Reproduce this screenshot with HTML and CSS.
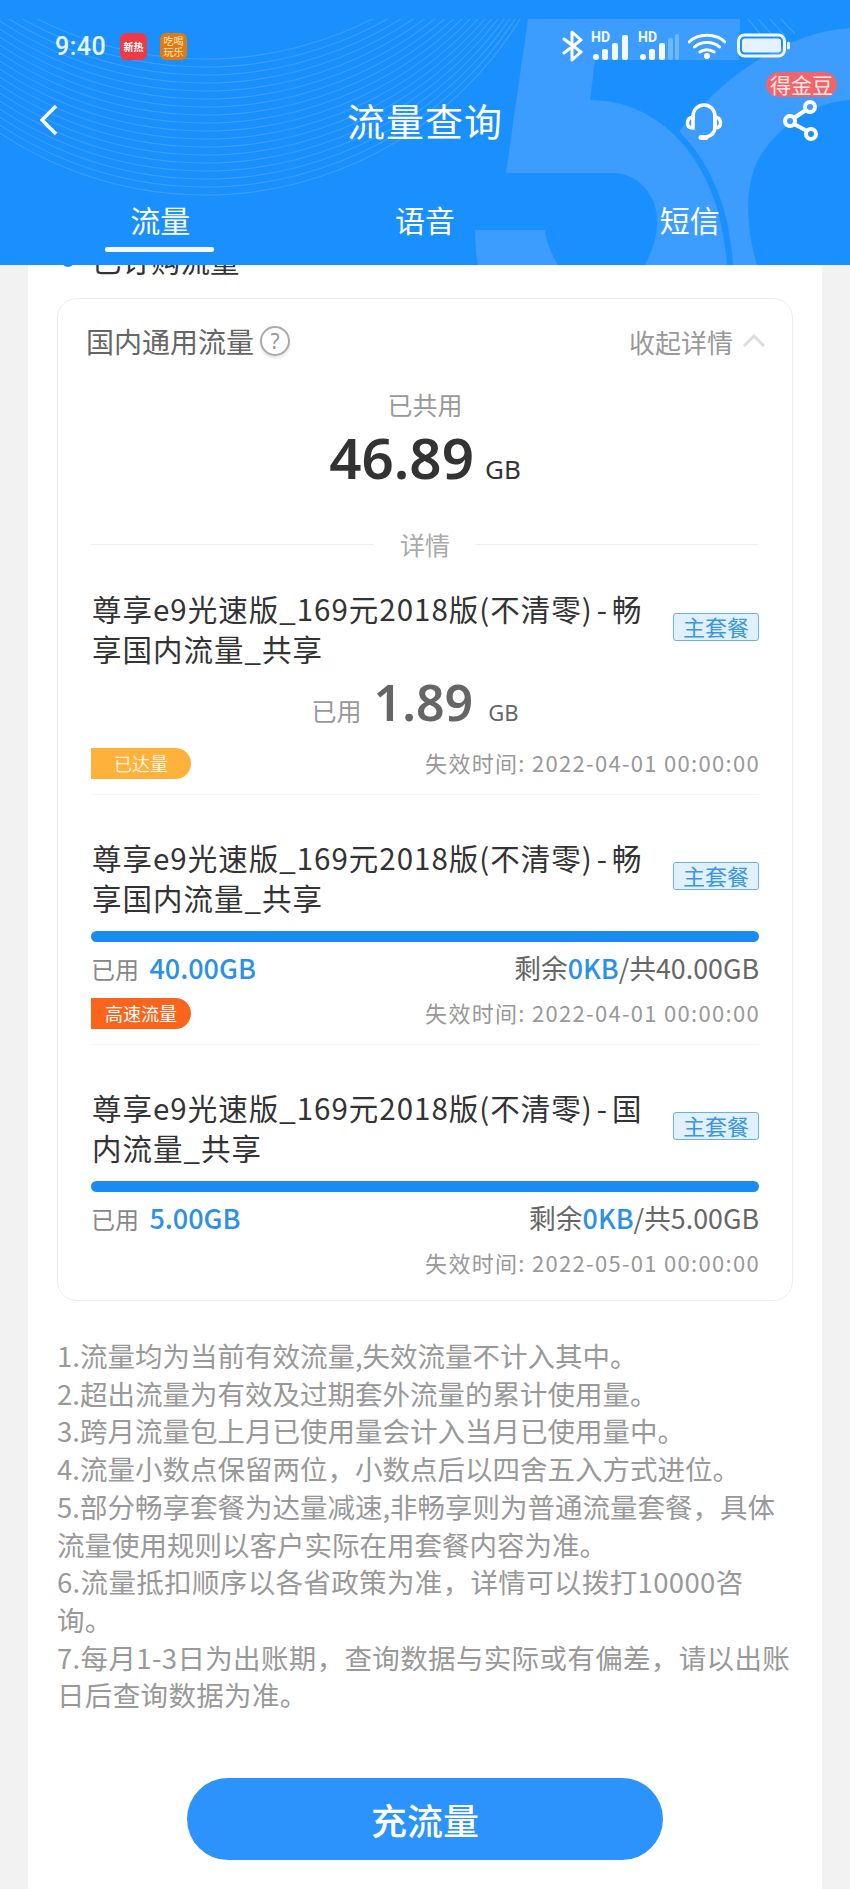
FILE: index.html
```html
<!DOCTYPE html>
<html lang="zh-CN">
<head>
<meta charset="utf-8">
<title>流量查询</title>
<link rel="stylesheet" href="styles.css">
</head>
<body>
<header class="header">
  <svg class="decor" width="850" height="265" viewBox="0 0 850 265" aria-hidden="true">
    <defs><clipPath id="lines"><rect x="0" y="19" width="850" height="246"/></clipPath></defs>
    <path class="shape" d="M850 28C790 32 730 70 680 130L700 265H757C745 225 745 185 758 160C775 130 810 102 850 100Z"/>
    <path class="shape five" d="M528 19H740L739 60H595L590 100C660 100 720 160 727 265H645C658 240 662 215 650 195C640 178 625 173 612 173H506ZM475 230H545C547 245 552 255 558 265H478C476 255 475 240 475 230Z"/>
    <g class="arcs" clip-path="url(#lines)">
      <circle cx="205" cy="-175" r="370"/><circle cx="205" cy="-183" r="370"/><circle cx="205" cy="-191" r="370"/>
      <circle cx="205" cy="-199" r="370"/><circle cx="205" cy="-207" r="370"/><circle cx="205" cy="-215" r="370"/>
      <circle cx="205" cy="-223" r="370"/><circle cx="205" cy="-231" r="370"/><circle cx="205" cy="-239" r="370"/>
      <circle cx="205" cy="-247" r="370"/><circle cx="205" cy="-255" r="370"/><circle cx="205" cy="-263" r="370"/>
      <circle cx="205" cy="-271" r="370"/><circle cx="205" cy="-279" r="370"/><circle cx="205" cy="-287" r="370"/>
      <circle cx="205" cy="-295" r="370"/><circle cx="205" cy="-303" r="370"/><circle cx="205" cy="-311" r="370"/>
      <path d="M748 19L762 36M758 19L775 38M770 19L785 36M781 19L795 34"/>
    </g>
  </svg>
  <div class="status">
    <div class="status-left">
      <span class="time">9:40</span>
      <span class="app app-red">新热</span>
      <span class="app app-orange">吃喝玩乐</span>
    </div>
    <div class="status-right">
      <svg width="22" height="32" viewBox="0 0 22 32" class="ico-line"><path d="M2 9L19 22L10 30V2L19 10L2 23"/></svg>
      <svg width="40" height="30" viewBox="0 0 40 30" class="sig"><text x="0" y="11" class="hd">HD</text><rect x="2" y="23" width="6" height="6" rx="3"/><rect x="11" y="18" width="6" height="11" rx="2"/><rect x="21" y="12" width="6" height="17" rx="2"/><rect x="31" y="4" width="6" height="25" rx="2"/></svg>
      <svg width="42" height="30" viewBox="0 0 42 30" class="sig"><text x="0" y="11" class="hd">HD</text><rect x="2" y="23" width="6" height="6" rx="3"/><rect x="11" y="18" width="6" height="11" rx="2"/><rect x="21" y="12" width="6" height="17" rx="2"/><rect class="dim" x="30" y="7" width="5" height="22" rx="2"/><rect class="dim" x="37" y="3" width="4" height="26" rx="2"/></svg>
      <svg width="38" height="28" viewBox="0 0 38 28" class="ico-line wifi"><path d="M1 10C10 1 28 1 37 10M6.500 15C13 9 25 9 31.500 15M12 20C16 17 22 17 26 20"/><circle class="dot" cx="19" cy="24" r="3"/></svg>
      <svg width="55" height="26" viewBox="0 0 55 26" class="batt"><rect class="batt-box" x="1.500" y="2" width="46" height="21" rx="6"/><rect class="batt-fill" x="5" y="5.500" width="39" height="14" rx="3"/><rect class="batt-fill" x="50" y="8.500" width="3" height="8" rx="1.500"/></svg>
    </div>
  </div>
  <div class="nav">
    <svg class="back" width="18" height="32" viewBox="0 0 18 32"><path d="M16 2L2 16L16 30"/></svg>
    <h1 class="title">流量查询</h1>
    <svg class="headset" width="38" height="40" viewBox="0 0 38 40"><path d="M8 17V15C8 -1 30 -1 30 15V24C30 30 27 34 21 35"/><path d="M8 15C4 15 2.500 18 2.500 21C2.500 24 4 26 8 26ZM30 15C34 15 35.500 18 35.500 21C35.500 24 34 26 30 26Z"/><path class="mic" d="M16 35.500H21"/></svg>
    <svg class="share" width="36" height="42" viewBox="0 0 36 42"><circle cx="27" cy="7" r="5"/><circle cx="7" cy="21" r="5"/><circle cx="28" cy="34" r="5"/><path d="M23 10L11 18M11 24L24 31"/></svg>
    <span class="badge">得金豆</span>
  </div>
  <nav class="tabs">
    <a class="tab tab-on">流量</a>
    <a class="tab">语音</a>
    <a class="tab">短信</a>
  </nav>
</header>

<main class="panel">
  <div class="heading"><i class="dot-mark"></i>已订购流量</div>
  <section class="card">
    <div class="card-head">
      <div class="head-left">国内通用流量<span class="help">?</span></div>
      <div class="head-right">收起详情<svg width="24" height="14" viewBox="0 0 24 14"><path d="M2 12L12 2L22 12"/></svg></div>
    </div>
    <div class="total-label">已共用</div>
    <div class="total"><b>46.89</b><span>GB</span></div>
    <div class="divider"><i></i><span>详情</span><i></i></div>

    <article class="item">
      <div class="item-top">
        <div class="item-title"><span class="ln">尊享e9光速版_169元2018版(不清零)<span class="dash">-</span>畅</span><span class="ln">享国内流量_共享</span></div>
        <span class="tag">主套餐</span>
      </div>
      <div class="used-big"><span class="ub-label">已用</span><b>1.89</b><span class="ub-unit">GB</span></div>
      <div class="foot"><span class="pill pill-amber">已达量</span><span class="expire">失效时间: 2022-04-01 00:00:00</span></div>
    </article>

    <article class="item">
      <div class="item-top">
        <div class="item-title"><span class="ln">尊享e9光速版_169元2018版(不清零)<span class="dash">-</span>畅</span><span class="ln">享国内流量_共享</span></div>
        <span class="tag">主套餐</span>
      </div>
      <div class="bar"></div>
      <div class="meter"><span>已用 <em>40.00GB</em></span><span class="left">剩余<em>0KB</em>/共40.00GB</span></div>
      <div class="foot foot-tight"><span class="pill pill-red">高速流量</span><span class="expire">失效时间: 2022-04-01 00:00:00</span></div>
    </article>

    <article class="item item-last">
      <div class="item-top">
        <div class="item-title"><span class="ln">尊享e9光速版_169元2018版(不清零)<span class="dash">-</span>国</span><span class="ln">内流量_共享</span></div>
        <span class="tag">主套餐</span>
      </div>
      <div class="bar"></div>
      <div class="meter"><span>已用 <em>5.00GB</em></span><span class="left">剩余<em>0KB</em>/共5.00GB</span></div>
      <div class="foot foot-end"><span class="expire">失效时间: 2022-05-01 00:00:00</span></div>
    </article>
  </section>

  <ol class="notes">
    <li>1.流量均为当前有效流量,失效流量不计入其中。</li>
    <li>2.超出流量为有效及过期套外流量的累计使用量。</li>
    <li>3.跨月流量包上月已使用量会计入当月已使用量中。</li>
    <li>4.流量小数点保留两位，小数点后以四舍五入方式进位。</li>
    <li>5.部分畅享套餐为达量减速,非畅享则为普通流量套餐，具体流量使用规则以客户实际在用套餐内容为准。</li>
    <li class="wide">6.流量抵扣顺序以各省政策为准，详情可以拨打10000咨<br>询。</li>
    <li class="wide">7.每月1-3日为出账期，查询数据与实际或有偏差，请以出账日后查询数据为准。</li>
  </ol>

  <button class="cta">充流量</button>
</main>
</body>
</html>
```
FILE: styles.css
```css
* { box-sizing: border-box; }
html, body { margin: 0; padding: 0; }
body {
  width: 850px;
  height: 1889px;
  overflow: hidden;
  background: #f2f2f2;
  font-family: "Noto Sans CJK SC", "Noto Sans", sans-serif;
  color: #333;
}

/* header */
.header {
  position: relative;
  z-index: 2;
  height: 265px;
  background: #1a90ff;
  color: #fff;
  overflow: hidden;
}
.decor { position: absolute; left: 0; top: 0; }
.shape { fill: #3d9dfe; }
.five { stroke: #1a90ff; stroke-width: 12; paint-order: stroke; }
.arcs { fill: none; stroke: #4aa5ff; stroke-width: 1.2; opacity: .75; }

.status {
  position: relative;
  height: 62px;
  padding: 30px 58px 0 55px;
  display: flex;
  justify-content: space-between;
  align-items: center;
}
.status-left { display: flex; align-items: center; }
.time { font: 500 25px/1 Roboto, sans-serif; color: #e6f5ff; width: 65px; letter-spacing: .5px; }
.app {
  width: 27px;
  height: 27px;
  border-radius: 6px;
  color: #fff;
  display: flex;
  align-items: center;
  justify-content: center;
  text-align: center;
  font-size: 10px;
  line-height: 11px;
  overflow: hidden;
}
.app-red { background: #ee3a47; margin-right: 13px; font-weight: 700; }
.app-orange { background: #dd7a14; color: #ffe6bd; }
.status-right { display: flex; align-items: center; gap: 7px; }
.ico-line { fill: none; stroke: #fff; stroke-width: 3; stroke-linecap: round; stroke-linejoin: round; }
.ico-line .dot { fill: #fff; stroke: none; }
.sig { overflow: visible; }
.sig rect { fill: #f2f9ff; }
.sig rect.dim { fill: #6db8ff; }
.hd { font: 700 14px Roboto, sans-serif; fill: #f2f9ff; }
.wifi { margin: 0 4px 0 1px; }
.batt-box { fill: none; stroke: #f2f9ff; stroke-width: 3; }
.batt-fill { fill: #e6f2ff; }

.nav {
  position: relative;
  height: 128px;
  display: flex;
  align-items: center;
  justify-content: center;
  padding-bottom: 10px;
}
.title { margin: 0; font-size: 38px; font-weight: 400; line-height: 1; letter-spacing: 1px; padding-bottom: 2px; }
.back { position: absolute; left: 40px; top: 42px; fill: none; stroke: #fff; stroke-width: 3.500; }
.headset { position: absolute; left: 685px; top: 40px; fill: none; stroke: #fff; stroke-width: 3.500; stroke-linecap: round; }
.headset .mic { stroke-width: 5; }
.share { position: absolute; left: 783px; top: 38px; fill: none; stroke: #fff; stroke-width: 4; }
.badge {
  position: absolute;
  left: 766px;
  top: 10px;
  width: 71px;
  height: 25px;
  border-radius: 13px;
  background: #f0656c;
  color: #ffe9e6;
  font-size: 21px;
  line-height: 25px;
  text-align: center;
}
.tabs { position: relative; display: flex; padding: 0 28px; }
.tab {
  flex: 1;
  height: 60px;
  padding-top: 8px;
  text-align: center;
  font-size: 30px;
  line-height: 42px;
  position: relative;
}
.tab-on::after {
  content: "";
  position: absolute;
  left: 77px;
  top: 57px;
  width: 109px;
  height: 5px;
  border-radius: 2px;
  background: #f4fbff;
}

/* panel */
.panel {
  position: relative;
  z-index: 1;
  width: 794px;
  height: 1624px;
  margin-left: 28px;
  padding: 0 29px;
  background: #fff;
  overflow: hidden;
}
.heading {
  margin-top: -27px;
  height: 60px;
  padding-left: 35px;
  font-size: 29.500px;
  line-height: 42px;
  position: relative;
}
.dot-mark {
  position: absolute;
  left: 5px;
  top: 17px;
  width: 12px;
  height: 12px;
  border-radius: 50%;
  background: #1a90ff;
}
.card {
  width: 736px;
  height: 1003px;
  border: 1px solid #ededed;
  border-radius: 20px;
  padding: 0 33px;
}
.card-head {
  height: 84px;
  margin: 0 -5px 4px;
  display: flex;
  justify-content: space-between;
  align-items: center;
  font-size: 28px;
}
.head-left { display: flex; align-items: center; color: #666; }
.help {
  width: 30px;
  height: 30px;
  margin-left: 6px;
  border: 2px solid #aaa;
  border-radius: 50%;
  color: #999;
  font: 400 21px/26px "Noto Sans", sans-serif;
  text-align: center;
  box-shadow: 0 2px 3px rgba(0, 0, 0, .12);
}
.head-right { display: flex; align-items: center; gap: 9px; color: #999; font-size: 26px; margin-right: -2px; }
.head-right svg { fill: none; stroke: #ddd; stroke-width: 3; }
.total-label { text-align: center; color: #999; font-size: 25px; line-height: 34px; margin-top: 3px; }
.total { display: flex; justify-content: center; align-items: baseline; gap: 11px; margin-top: 1px; height: 72px; line-height: 72px; }
.total b { font: 600 56.500px/72px "Noto Sans", sans-serif; color: #333; }
.total span { font: 400 26px/72px "Noto Sans", sans-serif; color: #333; }
.divider { display: flex; align-items: center; justify-content: space-between; color: #aaa; font-size: 25px; height: 40px; margin-top: 30px; }
.divider i { display: block; width: 283px; height: 1px; background: #eee; }

.item { border-bottom: 1px solid #f5f5f5; height: 231px; padding-top: 24px; }
.item + .item { height: 250px; padding-top: 42px; }
.item-last { border-bottom: 0; }
.item-top { display: flex; justify-content: space-between; padding-left: 1px; }
.item-title { width: 557px; font-size: 29.500px; letter-spacing: 1px; line-height: 40px; color: #333; }
.ln { display: block; height: 40px; white-space: nowrap; }
.dash { margin: 0 4px; }
.tag {
  flex: none;
  width: 86px;
  height: 28px;
  margin-top: 25px;
  border: 1.500px solid #69b1e8;
  border-radius: 3px;
  background: #e0f0fd;
  color: #3b97e0;
  font-size: 22px;
  line-height: 24px;
  text-align: center;
}
.used-big { display: flex; justify-content: center; align-items: baseline; height: 56px; line-height: 56px; margin-top: 6px; color: #999; font-size: 25px; padding-right: 20px; }
.used-big b { font: 600 50px/56px "Noto Sans", sans-serif; color: #666; margin: 0 15px 0 12px; }
.ub-unit { font: 400 22px/56px "Noto Sans", sans-serif; color: #666; }
.foot { display: flex; justify-content: space-between; align-items: center; margin-top: 18px; height: 31px; }
.foot-tight { margin-top: 9px; }
.foot-end { justify-content: flex-end; margin-top: 9px; }
.pill {
  width: 100px;
  height: 31px;
  border-radius: 0 16px 16px 0;
  color: #fff;
  font-size: 18px;
  line-height: 31px;
  text-align: center;
}
.pill-amber { background: #feb23b; color: #fff3dd; }
.pill-red { background: #fb641c; }
.expire { font-size: 22px; letter-spacing: 1.300px; line-height: 28px; padding-bottom: 3px; color: #999; margin-right: -1px; }
.bar { height: 11px; margin-top: 14px; border-radius: 6px; background: #1a8cf0; }
.meter { display: flex; justify-content: space-between; height: 42px; margin-top: 5px; font-size: 24px; line-height: 42px; color: #888; }
.meter em { font-style: normal; font-weight: 500; font-size: 27px; color: #2b90e8; margin-left: 5px; }
.meter .left { color: #666; font-size: 26.800px; }
.meter .left em { font-size: 26.800px; margin-left: 0; }

/* notes */
.notes {
  list-style: none;
  margin: 36px 0 0;
  padding: 0;
  font-size: 27.500px;
  line-height: 37.700px;
  color: #999;
}
.wide { letter-spacing: .35px; }
.cta {
  display: block;
  width: 476px;
  height: 82px;
  margin: 64px auto 0;
  border: 0;
  border-radius: 41px;
  background: #2b93fb;
  color: #fff;
  font-family: "Noto Sans CJK SC", sans-serif;
  font-size: 36px;
  font-weight: 500;
}
```
